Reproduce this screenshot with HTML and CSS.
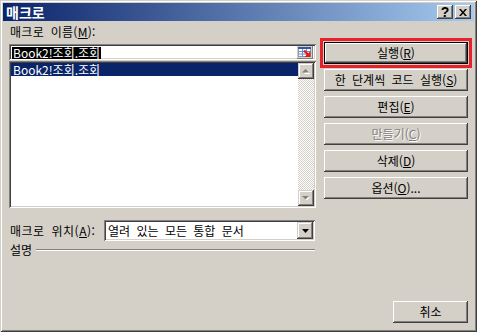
FILE: index.html
```html
<!DOCTYPE html>
<html lang="ko">
<head>
    <meta charset="UTF-8">
    <title>매크로</title>
    <link rel="stylesheet" href="styles.css">
</head>
<body>
    <div class="window">
        <div class="titlebar">
            <span class="title">매크로</span>
            <div class="title-buttons">
                <span class="tbtn tbtn-help">?</span>
                <span class="tbtn">
                    <svg width="8" height="7" viewBox="0 0 8 7">
                        <path d="M0 0h2l2 2.5L6 0h2L5 3.5 8 7H6L4 4.5 2 7H0l3-3.5z" fill="#000"/>
                    </svg>
                </span>
            </div>
        </div>

        <div class="content">
            <div class="main">
                <div class="left">
                    <div class="label">매크로 이름(<u>M</u>):</div>
                    <div class="namebox">
                        <span class="sel">Book2!조회.조회</span>
                        <span class="refbtn">
                            <svg width="16" height="13" viewBox="0 0 16 13">
                                <rect x="0" y="0" width="16" height="13" fill="#d4d0c8"/>
                                <path d="M0 12.5h16M15.5 0v13" stroke="#808080"/>
                                <rect x="1.5" y="1.5" width="12" height="9" fill="#fff" stroke="#7f9db9"/>
                                <rect x="1" y="1" width="13" height="2" fill="#2a5aa8"/>
                                <path d="M2 5.5h11M2 8h11M5.5 3v8M9.5 3v8" stroke="#6b8fd0"/>
                                <path d="M7 4.5l4.5 4.5" stroke="#e0201a" stroke-width="2.4"/>
                                <path d="M13.5 5v6h-6z" fill="#e0201a"/>
                            </svg>
                        </span>
                    </div>
                    <div class="listbox">
                        <div class="items">
                            <div class="item selected">Book2!조회.조회</div>
                        </div>
                        <div class="scrollbar">
                            <span class="sbtn">
                                <svg width="8" height="5" viewBox="0 0 8 5">
                                    <path d="M4 1l3 3H1z" fill="#fff" transform="translate(1 1)"/>
                                    <path d="M3.5 0l3.5 3.5H0z" fill="#808080"/>
                                </svg>
                            </span>
                            <span class="track"></span>
                            <span class="sbtn">
                                <svg width="8" height="5" viewBox="0 0 8 5">
                                    <path d="M1 1h7L4.5 4.5z" fill="#fff"/>
                                    <path d="M0 0h7L3.5 3.5z" fill="#808080"/>
                                </svg>
                            </span>
                        </div>
                    </div>
                </div>

                <div class="right">
                    <button class="btn default">실행(<u>R</u>)</button>
                    <button class="btn">한 단계씩 코드 실행(<u>S</u>)</button>
                    <button class="btn">편집(<u>E</u>)</button>
                    <button class="btn disabled">만들기(<u>C</u>)</button>
                    <button class="btn">삭제(<u>D</u>)</button>
                    <button class="btn">옵션(<u>O</u>)...</button>
                </div>
            </div>

            <div class="location">
                <span class="loc-label">매크로 위치(<u>A</u>):</span>
                <div class="combo">
                    <span class="combo-text">열려 있는 모든 통합 문서</span>
                    <span class="combo-btn">
                        <svg width="7" height="4" viewBox="0 0 7 4">
                            <path d="M0 0h7L3.5 4z" fill="#000"/>
                        </svg>
                    </span>
                </div>
            </div>

            <div class="desc">
                <span>설명</span>
                <span class="groove"></span>
            </div>

            <div class="footer">
                <button class="btn cancel">취소</button>
            </div>
        </div>
    </div>
</body>
</html>
```

FILE: styles.css
```css
* {
    box-sizing: border-box;
}

body {
    margin: 0;
    background-color: #d4d0c8;
    font-family: "Noto Sans CJK KR", sans-serif;
    font-size: 12px;
    word-spacing: 3px;
    color: #000;
}

u {
    text-decoration: underline;
    text-underline-offset: 1px;
}

.window {
    width: 477px;
    height: 332px;
    padding: 3px;
    display: flex;
    flex-direction: column;
    background-color: #d4d0c8;
    box-shadow: inset 1px 1px #d4d0c8, inset -1px -1px #404040,
                inset 2px 2px #fff, inset -2px -2px #808080;
}

.titlebar {
    height: 18px;
    padding: 0 3px 0 3px;
    display: flex;
    align-items: center;
    justify-content: space-between;
    background: linear-gradient(to right, #0a246a, #a6caf0);
}

.title {
    color: #fff;
    font-weight: bold;
    font-size: 14px;
    line-height: 18px;
}

.title-buttons {
    display: flex;
    gap: 2px;
}

.tbtn {
    width: 16px;
    height: 14px;
    display: flex;
    align-items: center;
    justify-content: center;
    background-color: #d4d0c8;
    box-shadow: inset -1px -1px #404040, inset 1px 1px #fff,
                inset -2px -2px #808080, inset 2px 2px #d4d0c8;
}

.tbtn-help {
    font-family: "Liberation Sans", sans-serif;
    font-weight: bold;
    font-size: 14px;
    line-height: 14px;
}

.content {
    flex: 1;
    padding: 0 6px 6px 6px;
    display: flex;
    flex-direction: column;
}

.main {
    display: flex;
    gap: 8px;
}

.left {
    width: 307px;
    display: flex;
    flex-direction: column;
}

.label {
    margin-top: 4px;
    height: 14px;
    line-height: 14px;
    padding-left: 1px;
    letter-spacing: 0.3px;
}

.namebox,
.listbox,
.combo {
    background-color: #fff;
    box-shadow: inset 1px 1px #808080, inset -1px -1px #fff,
                inset 2px 2px #404040, inset -2px -2px #d4d0c8;
}

.namebox {
    margin-top: 5px;
    height: 16px;
    padding: 2px 3px 1px 3px;
    display: flex;
    align-items: center;
}

.sel {
    background-color: #000;
    color: #fff;
    line-height: 12px;
    height: 12px;
    padding: 0 1px;
}

.refbtn {
    margin-left: auto;
    display: flex;
    width: 16px;
    height: 13px;
}

.listbox {
    margin-top: 1px;
    height: 147px;
    padding: 2px;
    display: flex;
}

.items {
    flex: 1;
}

.item {
    height: 13px;
    line-height: 13px;
    padding-left: 2px;
}

.item.selected {
    background-color: #0a246a;
    color: #fff;
}

.scrollbar {
    width: 16px;
    display: flex;
    flex-direction: column;
}

.sbtn {
    height: 16px;
    display: flex;
    align-items: center;
    justify-content: center;
    background-color: #d4d0c8;
    box-shadow: inset -1px -1px #404040, inset 1px 1px #d4d0c8,
                inset -2px -2px #808080, inset 2px 2px #fff;
}

.track {
    flex: 1;
    background: repeating-conic-gradient(#d4d0c8 0 25%, #fff 0 50%) 0 0 / 2px 2px;
}

.right {
    width: 144px;
    padding-top: 21px;
    display: flex;
    flex-direction: column;
    gap: 5px;
}

.btn {
    height: 22px;
    padding: 0;
    border: none;
    background-color: #d4d0c8;
    font-family: inherit;
    font-size: 12px;
    word-spacing: 3px;
    line-height: 20px;
    color: #000;
    text-align: center;
    box-shadow: inset -1px -1px #404040, inset 1px 1px #fff,
                inset -2px -2px #808080, inset 2px 2px #d4d0c8;
}

.btn.default {
    outline: 3px solid #e8202a;
    outline-offset: 1px;
    box-shadow: inset 0 0 0 1px #000, inset -2px -2px #404040,
                inset 2px 2px #fff, inset -3px -3px #808080;
}

.btn.disabled {
    color: #808080;
    text-shadow: 1px 1px #fff;
}

.location {
    margin-top: 12px;
    display: flex;
    align-items: center;
}

.loc-label {
    width: 95px;
    padding-left: 1px;
    letter-spacing: 0.5px;
}

.combo {
    width: 211px;
    height: 21px;
    padding: 2px;
    display: flex;
    align-items: center;
}

.combo-text {
    flex: 1;
    padding-left: 2px;
    line-height: 17px;
}

.combo-btn {
    width: 16px;
    height: 17px;
    display: flex;
    align-items: center;
    justify-content: center;
    background-color: #d4d0c8;
    box-shadow: inset -1px -1px #404040, inset 1px 1px #d4d0c8,
                inset -2px -2px #808080, inset 2px 2px #fff;
}

.desc {
    margin-top: 2px;
    width: 306px;
    height: 14px;
    padding-left: 1px;
    display: flex;
    align-items: center;
    gap: 4px;
    line-height: 14px;
}

.groove {
    flex: 1;
    height: 2px;
    border-top: 1px solid #808080;
    border-bottom: 1px solid #fff;
}

.footer {
    margin-top: auto;
    display: flex;
    justify-content: flex-end;
}

.btn.cancel {
    width: 75px;
}
```
